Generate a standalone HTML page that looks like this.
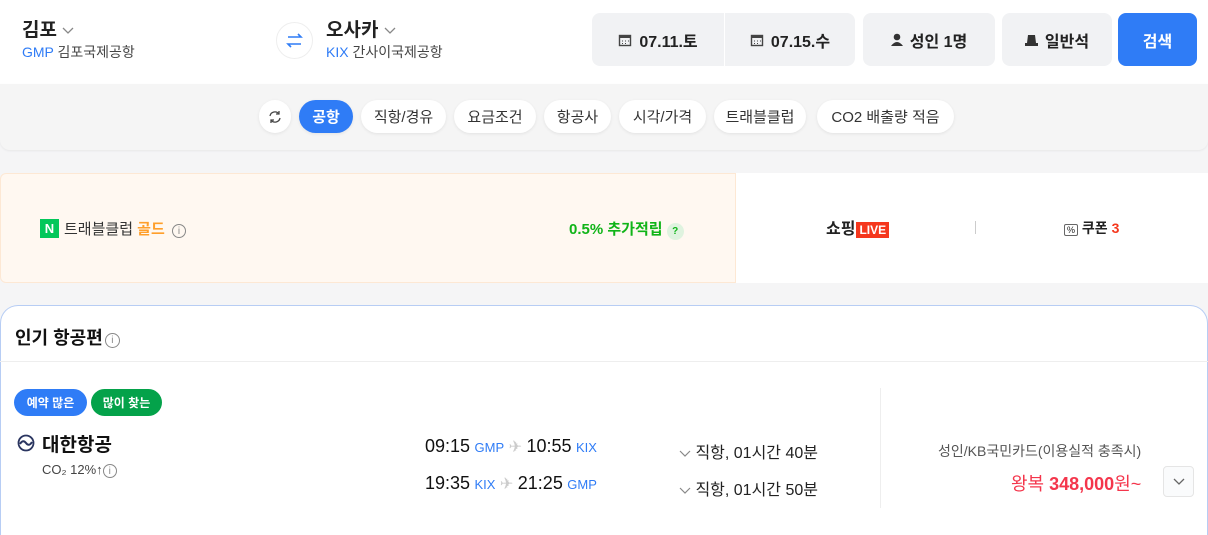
<!DOCTYPE html>
<html><head><meta charset="utf-8"><style>
*{margin:0;padding:0;box-sizing:border-box}
body{width:1208px;height:527px;overflow:hidden;background:#f5f5f6;font-family:"Liberation Sans","Noto Sans CJK KR",sans-serif;color:#222;position:relative}
.a{position:absolute}
.top{left:0;top:0;width:1208px;height:84px;background:#fff}
.city{font-size:19px;font-weight:bold;color:#222}
.sub{font-size:14px;color:#444}
.sub b{font-weight:normal;color:#2f7cf6}
.btn{background:#f1f2f4;border-radius:8px;height:53px;top:13px;display:flex;align-items:center;justify-content:center;font-size:16px;font-weight:bold;color:#222;gap:7px}
.chip{top:100px;height:33px;border-radius:17px;background:#fff;font-size:15px;color:#333;display:flex;align-items:center;justify-content:center;box-shadow:0 1px 3px rgba(0,0,0,.08);white-space:nowrap}
.fbar{left:0;top:84px;width:1208px;height:66px;background:#f5f5f5;border-radius:0 0 10px 10px;box-shadow:0 1px 2px rgba(0,0,0,.06)}
.tag{top:389px;height:27px;border-radius:14px;color:#fff;font-size:12px;font-weight:bold;display:flex;align-items:center;justify-content:center}
.t{font-size:18px;color:#111}
.c{font-size:13px;color:#2f7cf6}
.d{font-size:16px;color:#222}
.chev{display:inline-block;vertical-align:middle}
</style></head><body>
<div class="a top"></div>
<div class="a city" style="left:22px;top:15px">김포 <svg class="chev" width="12" height="8"><path d="M1 1l5 5 5-5" fill="none" stroke="#888" stroke-width="1.3"/></svg></div>
<div class="a sub" style="left:22px;top:42px"><b>GMP</b> 김포국제공항</div>
<div class="a" style="left:276px;top:22px;width:37px;height:37px;border-radius:50%;border:1px solid #eee;background:#fff"><svg width="35" height="35"><path d="M11 14h13l-3-3M24 21H11l3 3" fill="none" stroke="#2f7cf6" stroke-width="1.6"/></svg></div>
<div class="a city" style="left:326px;top:15px">오사카 <svg class="chev" width="12" height="8"><path d="M1 1l5 5 5-5" fill="none" stroke="#888" stroke-width="1.3"/></svg></div>
<div class="a sub" style="left:326px;top:42px"><b>KIX</b> 간사이국제공항</div>
<div class="a btn" style="left:592px;width:132px;border-radius:8px 0 0 8px"><svg width="14" height="14"><rect x="1.5" y="2.5" width="11" height="10" fill="none" stroke="#444" stroke-width="1.4"/><rect x="1.5" y="2.5" width="11" height="2.5" fill="#444"/><path d="M4 8h1M7 8h1M10 8h1M4 10.5h1M7 10.5h1" stroke="#444"/></svg>07.11.토</div>
<div class="a btn" style="left:725px;width:130px;border-radius:0 8px 8px 0"><svg width="14" height="14"><rect x="1.5" y="2.5" width="11" height="10" fill="none" stroke="#444" stroke-width="1.4"/><rect x="1.5" y="2.5" width="11" height="2.5" fill="#444"/><path d="M4 8h1M7 8h1M10 8h1M4 10.5h1M7 10.5h1" stroke="#444"/></svg>07.15.수</div>
<div class="a btn" style="left:863px;width:132px"><svg width="12" height="13"><circle cx="6" cy="4" r="3.3" fill="#333"/><path d="M0 13 Q6 5 12 13Z" fill="#333"/></svg>성인 1명</div>
<div class="a btn" style="left:1002px;width:110px"><svg width="13" height="12"><path d="M3 1h7l1 8H2z" fill="#333"/><rect x="0" y="9" width="13" height="3" fill="#333"/></svg>일반석</div>
<div class="a btn" style="left:1118px;width:79px;background:#2f7cf6;color:#fff">검색</div>
<div class="a fbar"></div>
<div class="a chip" style="left:259px;width:32px"><svg width="16" height="16"><path d="M3 7a5 5 0 0 1 9-2M13 9a5 5 0 0 1-9 2" fill="none" stroke="#444" stroke-width="1.3"/><path d="M12 2v3h-3M4 14v-3h3" fill="none" stroke="#444" stroke-width="1.3"/></svg></div>
<div class="a chip" style="left:299px;width:54px;background:#2f7cf6;color:#fff;font-weight:bold">공항</div>
<div class="a chip" style="left:361px;width:85px">직항/경유</div>
<div class="a chip" style="left:454px;width:82px">요금조건</div>
<div class="a chip" style="left:544px;width:67px">항공사</div>
<div class="a chip" style="left:619px;width:87px">시각/가격</div>
<div class="a chip" style="left:714px;width:92px">트래블클럽</div>
<div class="a chip" style="left:817px;width:137px">CO2 배출량 적음</div>
<div class="a" style="left:0;top:173px;width:736px;height:110px;background:#fff8f1;border:1px solid #fde8d4;border-radius:6px 0 0 6px"></div>
<div class="a" style="left:736px;top:173px;width:472px;height:110px;background:#fff"></div>
<div class="a" style="left:40px;top:219px;width:19px;height:19px;background:#03c75a;color:#fff;font-size:13px;font-weight:bold;text-align:center;line-height:19px">N</div>
<div class="a" style="left:64px;top:218px;font-size:15px;color:#333">트래블클럽 <b style="color:#ff9f2b">골드</b> <span style="color:#888;border:1px solid #888;border-radius:50%;display:inline-block;width:14px;height:14px;font-size:10px;text-align:center;line-height:13px;margin-left:3px">i</span></div>
<div class="a" style="left:569px;top:218px;font-size:15px;font-weight:bold;color:#10b418">0.5% 추가적립 <span style="display:inline-block;width:17px;height:17px;border-radius:50%;background:#dff3df;font-size:10px;text-align:center;line-height:17px">?</span></div>
<div class="a" style="left:826px;top:215px;font-size:16px;font-weight:bold;color:#222">쇼핑<span style="background:#f5371d;color:#fff;font-size:12px;padding:1px 3px;margin-left:1px">LIVE</span></div>
<div class="a" style="left:975px;top:221px;width:1px;height:13px;background:#ccc"></div>
<div class="a" style="left:1064px;top:218px;font-size:14px;font-weight:bold;color:#222"><span style="border:1px solid #666;border-radius:2px;font-size:9px;padding:0 2px;font-weight:normal">%</span> 쿠폰 <span style="color:#f5371d">3</span></div>
<div class="a" style="left:0;top:305px;width:1208px;height:230px;background:#fff;border:1px solid #b7cdf4;border-bottom:none;border-radius:18px 18px 0 0"></div>
<div class="a" style="left:0;top:361px;width:1208px;height:1px;background:#eee"></div>
<div class="a" style="left:15px;top:324px;font-size:18px;font-weight:bold;color:#111">인기 항공편<span style="color:#888;border:1px solid #888;border-radius:50%;display:inline-block;width:15px;height:15px;font-size:10px;text-align:center;line-height:14px;font-weight:normal;margin-left:2px;vertical-align:1px">i</span></div>
<div class="a tag" style="left:14px;width:73px;background:#2f7cf6">예약 많은</div>
<div class="a tag" style="left:91px;width:71px;background:#04a24a">많이 찾는</div>
<div class="a" style="left:17px;top:434px"><svg width="18" height="18"><circle cx="9" cy="9" r="7.5" fill="none" stroke="#2a3560" stroke-width="1.8"/><path d="M3 10q3-5 6-1t6-1" fill="none" stroke="#2a3560" stroke-width="2"/></svg></div>
<div class="a" style="left:42px;top:430px;font-size:19px;font-weight:bold;color:#111">대한항공</div>
<div class="a" style="left:42px;top:462px;font-size:13px;color:#444">CO₂ 12%↑<span style="color:#888;border:1px solid #888;border-radius:50%;display:inline-block;width:14px;height:14px;font-size:10px;text-align:center;line-height:13px">i</span></div>
<div class="a" style="left:425px;top:436px"><span class="t">09:15</span> <span class="c">GMP</span> <span style="color:#ccc">✈</span> <span class="t">10:55</span> <span class="c">KIX</span></div>
<div class="a" style="left:425px;top:473px"><span class="t">19:35</span> <span class="c">KIX</span> <span style="color:#ccc">✈</span> <span class="t">21:25</span> <span class="c">GMP</span></div>
<div class="a d" style="left:679px;top:439px"><svg class="chev" width="12" height="8"><path d="M1 1l5 5 5-5" fill="none" stroke="#888" stroke-width="1.2"/></svg> 직항, 01시간 40분</div>
<div class="a d" style="left:679px;top:476px"><svg class="chev" width="12" height="8"><path d="M1 1l5 5 5-5" fill="none" stroke="#888" stroke-width="1.2"/></svg> 직항, 01시간 50분</div>
<div class="a" style="left:880px;top:388px;width:1px;height:120px;background:#eee"></div>
<div class="a" style="left:938px;top:441px;font-size:14px;color:#555">성인/KB국민카드(이용실적 충족시)</div>
<div class="a" style="left:1011px;top:470px;font-size:18px;color:#f4364c">왕복 <b>348,000</b>원~</div>
<div class="a" style="left:1163px;top:466px;width:31px;height:31px;border:1px solid #e5e5e5;border-radius:4px;background:#fafbfc;display:flex;align-items:center;justify-content:center"><svg width="12" height="8"><path d="M1 1l5 5 5-5" fill="none" stroke="#666" stroke-width="1.3"/></svg></div>
</body></html>
